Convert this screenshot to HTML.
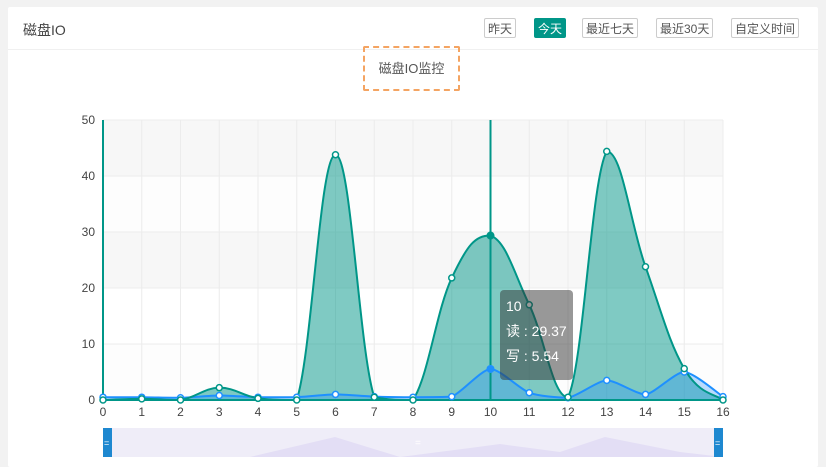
<!DOCTYPE html>
<html><head><meta charset="utf-8"><style>
body{margin:0;width:826px;height:457px;background:#f2f2f2;overflow:hidden;font-family:"Liberation Sans","Noto Sans CJK SC",sans-serif;}
.card{position:absolute;left:8px;top:7px;width:810px;height:460px;background:#fff;border-radius:2px;}
.hd{position:absolute;left:0;top:0;width:810px;height:42px;border-bottom:1px solid #f0f0f0;}
.ttl{position:absolute;left:15px;top:13px;font-size:14px;color:#444;}
.btn{position:absolute;top:11px;height:20px;line-height:20px;border:1px solid #ccc;font-size:12px;color:#555;padding:0 3px;border-radius:2px;box-sizing:border-box;}
.on{background:#009688;border-color:#009688;color:#fff;}
.lg{position:absolute;left:355px;top:39px;width:97px;height:45px;border:2px dashed #f4a462;box-sizing:border-box;border-radius:2px;text-align:center;line-height:41px;font-size:13px;color:#555;}
svg{position:absolute;left:0;top:0;}
.tip{position:absolute;left:500px;top:290px;width:73px;height:90px;background:rgba(50,50,50,0.5);border-radius:4px;color:#fff;font-size:14px;box-sizing:border-box;padding:4px 6px;line-height:25px;}
</style></head><body>
<div class="card">
<div class="hd"><div class="ttl">磁盘IO</div>
<div class="btn" style="left:476px">昨天</div>
<div class="btn on" style="left:526px">今天</div>
<div class="btn" style="left:574px">最近七天</div>
<div class="btn" style="left:648px">最近30天</div>
<div class="btn" style="left:723px">自定义时间</div>
</div>
<div class="lg">磁盘IO监控</div>
</div>
<svg id="s" width="826" height="457" xmlns="http://www.w3.org/2000/svg">
<rect x="103" y="120" width="620" height="56" fill="#f7f7f7"/>
<rect x="103" y="232" width="620" height="56" fill="#f7f7f7"/>
<rect x="103" y="344" width="620" height="56" fill="#fdfdfd"/>
<rect x="103" y="176" width="620" height="56" fill="#fdfdfd"/>
<g id="grid" stroke="#ececec" stroke-width="1"></g>
<g id="plot"></g>
<g font-size="12" fill="#444" font-family="Liberation Sans,sans-serif" id="lbl">
<text x="95" y="124" text-anchor="end">50</text>
<text x="95" y="180" text-anchor="end">40</text>
<text x="95" y="236" text-anchor="end">30</text>
<text x="95" y="292" text-anchor="end">20</text>
<text x="95" y="348" text-anchor="end">10</text>
<text x="95" y="404" text-anchor="end">0</text>
</g>
<rect x="103" y="428" width="620" height="29" fill="#efedf8"/>
<path d="M103 457 L250 457 L335 437 L400 457 L470 448 L500 444 L560 452 L605 437 L680 452 L723 457Z" fill="#e3def5"/>
<text x="415" y="446" fill="#fff" font-size="10">=</text>
<rect x="103" y="428" width="9" height="29" fill="#1e88d0"/>
<rect x="714" y="428" width="9" height="29" fill="#1e88d0"/>
<text x="104" y="446" fill="#fff" font-size="9">=</text>
<text x="715" y="446" fill="#fff" font-size="9">=</text>
</svg>
<div class="tip">10<br>读 : 29.37<br>写 : 5.54</div>
<script>
var X=function(i){return 103+i*38.75},Y=function(v){return 400-v*5.6};
var g=document.getElementById('grid'),p=document.getElementById('plot'),L=document.getElementById('lbl'),h='',l='';
for(var i=0;i<=16;i++){h+='<line x1="'+X(i)+'" y1="120" x2="'+X(i)+'" y2="400"/>';l+='<text x="'+X(i)+'" y="416" text-anchor="middle">'+i+'</text>';}
for(var k=0;k<5;k++)h+='<line x1="103" y1="'+(120+k*56)+'" x2="723" y2="'+(120+k*56)+'"/>';
g.innerHTML=h;L.innerHTML+=l;
var R=[0,0.2,0,2.2,0.3,0,43.8,0.5,0,21.8,29.37,17,0.5,44.4,23.8,5.6,0];
var W=[0.5,0.5,0.4,0.8,0.5,0.5,1,0.6,0.5,0.6,5.54,1.3,0.4,3.5,1,5,0.6];
function cl(v,a,b){var lo=Math.min(a,b),hi=Math.max(a,b);return Math.max(lo,Math.min(hi,v));}
function path(d,t){var pts=d.map(function(v,i){return[X(i),Y(v)]});var s='M'+pts[0];
for(var i=0;i<pts.length-1;i++){var p0=pts[i-1]||pts[i],p1=pts[i],p2=pts[i+1],p3=pts[i+2]||p2;
var c1=[p1[0]+(p2[0]-p0[0])*t,cl(p1[1]+(p2[1]-p0[1])*t,p1[1],p2[1])],c2=[p2[0]-(p3[0]-p1[0])*t,cl(p2[1]-(p3[1]-p1[1])*t,p1[1],p2[1])];
s+=' C'+c1+' '+c2+' '+p2;}return s;}
var o='';
var pr=path(R,0.2),pw=path(W,0.12);
o+='<path d="'+pr+' L723,400 L103,400Z" fill="rgba(0,150,136,0.5)"/>';
o+='<path d="'+pw+' L723,400 L103,400Z" fill="rgba(30,144,255,0.3)"/>';
o+='<line x1="490.5" y1="120" x2="490.5" y2="400" stroke="#009688" stroke-width="2"/>';
o+='<line x1="103" y1="120" x2="103" y2="400" stroke="#009688" stroke-width="2"/>';
o+='<line x1="103" y1="400" x2="723" y2="400" stroke="#009688" stroke-width="2"/>';
o+='<path d="'+pw+'" fill="none" stroke="#1e90ff" stroke-width="2"/>';
o+='<path d="'+pr+'" fill="none" stroke="#009688" stroke-width="2"/>';
W.forEach(function(v,i){o+='<circle cx="'+X(i)+'" cy="'+Y(v)+'" r="3" fill="#fff" stroke="#1e90ff" stroke-width="1.5"/>'});
R.forEach(function(v,i){o+='<circle cx="'+X(i)+'" cy="'+Y(v)+'" r="3" fill="#fff" stroke="#009688" stroke-width="1.5"/>'});
o+='<circle cx="'+X(10)+'" cy="'+Y(29.37)+'" r="4" fill="#009688"/>';
o+='<circle cx="'+X(10)+'" cy="'+Y(5.54)+'" r="4" fill="#1e90ff"/>';
p.innerHTML=o;
</script>
</body></html>
